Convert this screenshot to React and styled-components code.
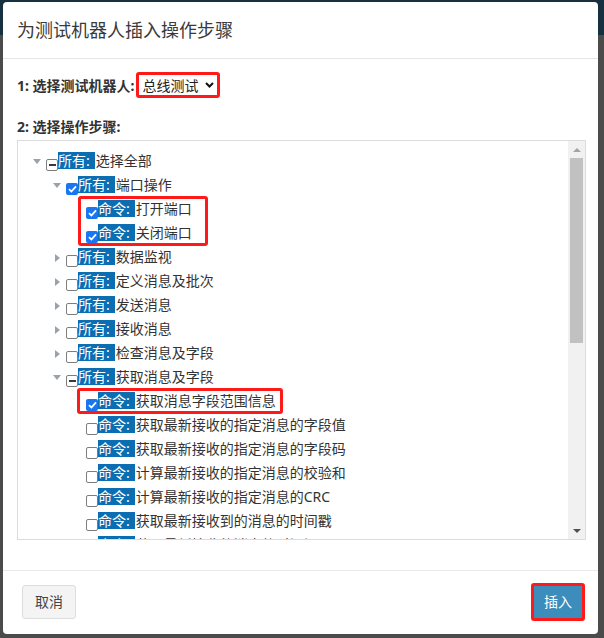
import React from "react";
import styled, { createGlobalStyle } from "styled-components";

const GlobalStyle = createGlobalStyle`
  html, body {
    margin: 0;
    padding: 0;
  }
  body {
    width: 604px;
    height: 638px;
    overflow: hidden;
    background: linear-gradient(#16303f 0 35px, #4b4b4b 35px);
    font-family: "Noto Sans", "Noto Sans CJK SC", sans-serif;
    color: #333;
  }
`;

const Backdrop = styled.div`
  padding: 2px 6px 4px 3px;
`;

const Modal = styled.div`
  width: 595px;
  height: 632px;
  background: #fff;
  border-radius: 4px;
  display: flex;
  flex-direction: column;
  overflow: hidden;
`;

const Header = styled.div`
  padding: 15px 14px;
  border-bottom: 1px solid #e5e5e5;
`;

const Title = styled.h4`
  margin: 0;
  font-size: 18px;
  line-height: 26px;
  font-weight: normal;
  color: #3a3a3a;
`;

const Body = styled.div`
  padding: 13px 12px 30px 14px;
  display: flex;
  flex-direction: column;
`;

const Field = styled.div`
  display: flex;
  align-items: center;
  height: ${(p) => p.$h || 26}px;
  margin-top: ${(p) => p.$mt || 0}px;
`;

const Label = styled.span`
  font-size: 14px;
  font-weight: bold;
  color: #333;
`;

const SelectBox = styled.div`
  margin-left: 1px;
  height: 20px;
  display: inline-flex;
  align-items: center;
  gap: 6px;
  padding: 0 3px 0 4px;
  border: 3px solid #ff1a1a;
  border-radius: 3px;
  font-size: 14px;
  color: #222;
`;

const Tree = styled.div`
  margin-top: 4px;
  height: 398px;
  border: 1px solid #dcdcdc;
  display: flex;
`;

const List = styled.div`
  position: relative;
  flex: 1;
  overflow: hidden;
  padding-top: 7px;
`;

const Row = styled.div`
  display: flex;
  align-items: center;
  height: 24px;
  padding-left: ${(p) => 15 + p.$level * 20}px;
  white-space: nowrap;
`;

const Toggle = styled.span`
  width: 13px;
  height: 24px;
  display: flex;
  align-items: center;
  flex-shrink: 0;
`;

const TriDown = styled.span`
  width: 0;
  height: 0;
  margin-top: 2px;
  border-left: 4px solid transparent;
  border-right: 4px solid transparent;
  border-top: 5px solid #9aa3ab;
`;

const TriRight = styled.span`
  width: 0;
  height: 0;
  margin-left: 2px;
  margin-top: 4px;
  border-top: 4.5px solid transparent;
  border-bottom: 4.5px solid transparent;
  border-left: 5px solid #9aa3ab;
`;

const Check = styled.span`
  align-self: flex-end;
  margin-bottom: 1px;
  width: 12px;
  height: 12px;
  box-sizing: border-box;
  flex-shrink: 0;
  border-radius: 2px;
  display: flex;
  align-items: center;
  justify-content: center;
  background: ${(p) => (p.$state === "on" ? "#1a75f0" : "#fff")};
  border: ${(p) => (p.$state === "on" ? "none" : "1px solid #7d7d7d")};
`;

const Dash = styled.span`
  width: 7px;
  height: 2px;
  background: #3a3a3a;
`;

const Tag = styled.span`
  height: 17px;
  line-height: 17px;
  padding-right: 5px;
  background: #0b6db2;
  color: #fff;
  font-size: 14px;
`;

const Name = styled.span`
  margin-left: 1px;
  font-size: 14px;
  color: #333;
  line-height: 17px;
`;

const Mark = styled.div`
  position: absolute;
  box-sizing: border-box;
  border: 3px solid #ff1a1a;
  border-radius: 3px;
  pointer-events: none;
`;

const ScrollBar = styled.div`
  width: 17px;
  background: #f1f1f1;
  display: flex;
  flex-direction: column;
  align-items: center;
`;

const ArrowBox = styled.div`
  height: 17px;
  width: 17px;
  display: flex;
  align-items: center;
  justify-content: center;
`;

const ArrowUp = styled.span`
  border-left: 4px solid transparent;
  border-right: 4px solid transparent;
  border-bottom: 4px solid #a3a3a3;
`;

const ArrowDown = styled.span`
  border-left: 4px solid transparent;
  border-right: 4px solid transparent;
  border-top: 4px solid #505050;
`;

const Thumb = styled.div`
  width: 13px;
  height: 185px;
  background: #c1c1c1;
`;

const Spacer = styled.div`
  flex: 1;
`;

const Footer = styled.div`
  border-top: 1px solid #e9e9e9;
  padding: 12px 13px 13px 19px;
  display: flex;
  align-items: center;
  justify-content: space-between;
`;

const Button = styled.button`
  font-family: inherit;
  font-size: 14px;
  line-height: 20px;
  border-radius: 3px;
  cursor: pointer;
  padding: ${(p) => (p.$primary ? "6px 10px" : "6px 12px")};
  background: ${(p) => (p.$primary ? "#3c8dbc" : "#f4f4f4")};
  color: ${(p) => (p.$primary ? "#fff" : "#444")};
  border: ${(p) => (p.$primary ? "3px solid #ff1a1a" : "1px solid #ddd")};
`;

const rows = [
  { level: 0, toggle: "open", state: "mixed", tag: "所有:", name: "选择全部" },
  { level: 1, toggle: "open", state: "on", tag: "所有:", name: "端口操作" },
  { level: 2, state: "on", tag: "命令:", name: "打开端口" },
  { level: 2, state: "on", tag: "命令:", name: "关闭端口" },
  { level: 1, toggle: "closed", state: "off", tag: "所有:", name: "数据监视" },
  { level: 1, toggle: "closed", state: "off", tag: "所有:", name: "定义消息及批次" },
  { level: 1, toggle: "closed", state: "off", tag: "所有:", name: "发送消息" },
  { level: 1, toggle: "closed", state: "off", tag: "所有:", name: "接收消息" },
  { level: 1, toggle: "closed", state: "off", tag: "所有:", name: "检查消息及字段" },
  { level: 1, toggle: "open", state: "mixed", tag: "所有:", name: "获取消息及字段" },
  { level: 2, state: "on", tag: "命令:", name: "获取消息字段范围信息" },
  { level: 2, state: "off", tag: "命令:", name: "获取最新接收的指定消息的字段值" },
  { level: 2, state: "off", tag: "命令:", name: "获取最新接收的指定消息的字段码" },
  { level: 2, state: "off", tag: "命令:", name: "计算最新接收的指定消息的校验和" },
  { level: 2, state: "off", tag: "命令:", name: "计算最新接收的指定消息的CRC" },
  { level: 2, state: "off", tag: "命令:", name: "获取最新接收到的消息的时间戳" },
  { level: 2, state: "off", tag: "命令:", name: "获取最新接收的消息的时间间隔" },
];

// red highlight boxes: which rows they cover and how wide they are
const marks = [
  { start: 2, count: 2, left: 60, width: 130 },
  { start: 10, count: 1, left: 59, width: 206 },
];

const Tick = () => (
  <svg width="9" height="8" viewBox="0 0 9 8">
    <path d="M1 4.2 L3.4 6.5 L8 1.3" fill="none" stroke="#fff" strokeWidth="1.8" />
  </svg>
);

const Chevron = () => (
  <svg width="9" height="6" viewBox="0 0 9 6">
    <path d="M1 1 L4.5 4.5 L8 1" fill="none" stroke="#111" strokeWidth="2" />
  </svg>
);

const TreeRow = ({ row }) => (
  <Row $level={row.level}>
    <Toggle>
      {row.toggle === "open" && <TriDown />}
      {row.toggle === "closed" && <TriRight />}
    </Toggle>
    <Check $state={row.state}>
      {row.state === "on" && <Tick />}
      {row.state === "mixed" && <Dash />}
    </Check>
    <Tag>{row.tag}</Tag>
    <Name>{row.name}</Name>
  </Row>
);

export default function App() {
  return (
    <>
      <GlobalStyle />
      <Backdrop>
        <Modal>
          <Header>
            <Title>为测试机器人插入操作步骤</Title>
          </Header>
          <Body>
            <Field>
              <Label>1: 选择测试机器人:</Label>
              <SelectBox>
                总线测试
                <Chevron />
              </SelectBox>
            </Field>
            <Field $h={20} $mt={18}>
              <Label>2: 选择操作步骤:</Label>
            </Field>
            <Tree>
              <List>
                {rows.map((r, i) => (
                  <TreeRow key={i} row={r} />
                ))}
                {marks.map((m, i) => (
                  <Mark
                    key={i}
                    style={{
                      top: 7 + m.start * 24,
                      left: m.left,
                      width: m.width,
                      height: m.count * 24 + 2,
                    }}
                  />
                ))}
              </List>
              <ScrollBar>
                <ArrowBox>
                  <ArrowUp />
                </ArrowBox>
                <Thumb />
                <Spacer />
                <ArrowBox>
                  <ArrowDown />
                </ArrowBox>
              </ScrollBar>
            </Tree>
          </Body>
          <Footer>
            <Button>取消</Button>
            <Button $primary>插入</Button>
          </Footer>
        </Modal>
      </Backdrop>
    </>
  );
}
